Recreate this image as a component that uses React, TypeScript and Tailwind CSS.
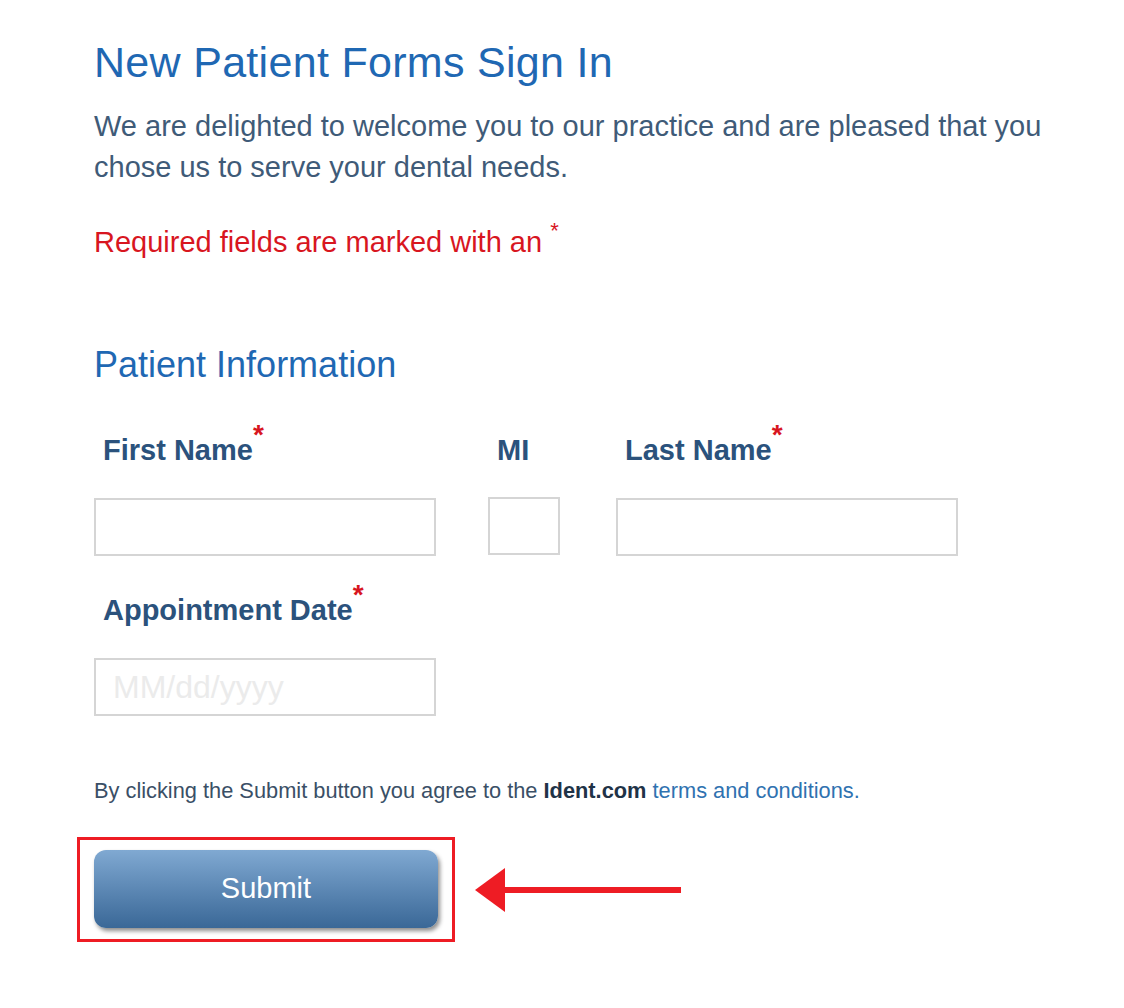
export default function App() {
  return (
    <div className="min-h-screen bg-white pl-[94px] pt-[36px] [font-family:'Liberation_Sans',Arial,sans-serif]">
      <h1 className="text-[43px] leading-[52px] tracking-[0.3px] text-[#1f68b3]">New Patient Forms Sign In</h1>
      <p className="mt-[18px] w-[985px] text-[29px] leading-[41px] text-[#3f5b78]">
        We are delighted to welcome you to our practice and are pleased that you chose us to serve your dental needs.
      </p>
      <p className="mt-[34px] text-[29px] leading-[41px] text-[#d8161f]">
        Required fields are marked with an <sup className="relative top-[-14px] text-[22px]">*</sup>
      </p>

      <h2 className="mt-[78px] text-[36px] leading-[48px] text-[#1f68b3]">Patient Information</h2>

      <div className="mt-[45px] flex gap-[52px]">
        <div className="flex w-[342px] flex-col">
          <Label text="First Name" required />
          <input className="mt-[31px] h-[58px] w-[342px] border-2 border-[#d5d5d5] bg-white px-4 text-[27px] outline-none" />
        </div>
        <div className="flex w-[72px] flex-col">
          <Label text="MI" />
          <input className="mt-[31px] h-[58px] w-[72px] border-2 border-[#d5d5d5] bg-white px-2 text-[27px] outline-none" />
        </div>
        <div className="ml-[4px] flex w-[342px] flex-col">
          <Label text="Last Name" required />
          <input className="mt-[31px] h-[58px] w-[342px] border-2 border-[#d5d5d5] bg-white px-4 text-[27px] outline-none" />
        </div>
      </div>

      <div className="mt-[38px] flex w-[342px] flex-col">
        <Label text="Appointment Date" required />
        <input
          placeholder="MM/dd/yyyy"
          className="mt-[31px] h-[58px] w-[342px] border-2 border-[#d5d5d5] bg-white px-[17px] text-[32px] outline-none placeholder:text-[#ebebeb]"
        />
      </div>

      <p className="mt-[61px] text-[21.8px] leading-[28px] text-[#3a4f66]">
        By clicking the Submit button you agree to the <b className="text-[#1f3347]">Ident.com</b>{" "}
        <a className="text-[#2f72b0]">terms and conditions.</a>
      </p>

      <div className="mt-[32px] ml-[-17px] flex items-center gap-[20px]">
        <div className="border-[3px] border-[#ee1c24] px-[14px] pt-[10px] pb-[11px]">
          <button className="h-[78px] w-[344px] rounded-[12px] bg-gradient-to-b from-[#80a9d2] to-[#3a6897] text-[29px] text-white shadow-[2px_3px_4px_rgba(0,0,0,0.45)]">
            Submit
          </button>
        </div>
        <svg width="210" height="48" viewBox="0 0 210 48">
          <polygon points="0,24 30,2 30,46" fill="#ee1c24" />
          <rect x="28" y="21" width="178" height="6" fill="#ee1c24" />
        </svg>
      </div>
    </div>
  );
}

function Label({ text, required }: { text: string; required?: boolean }) {
  return (
    <div className="pl-[9px] text-[29px] font-bold leading-[32px] text-[#2b527c]">
      {text}
      {required && <span className="relative top-[-16px] text-[28px] text-[#d8161f]">*</span>}
    </div>
  );
}
